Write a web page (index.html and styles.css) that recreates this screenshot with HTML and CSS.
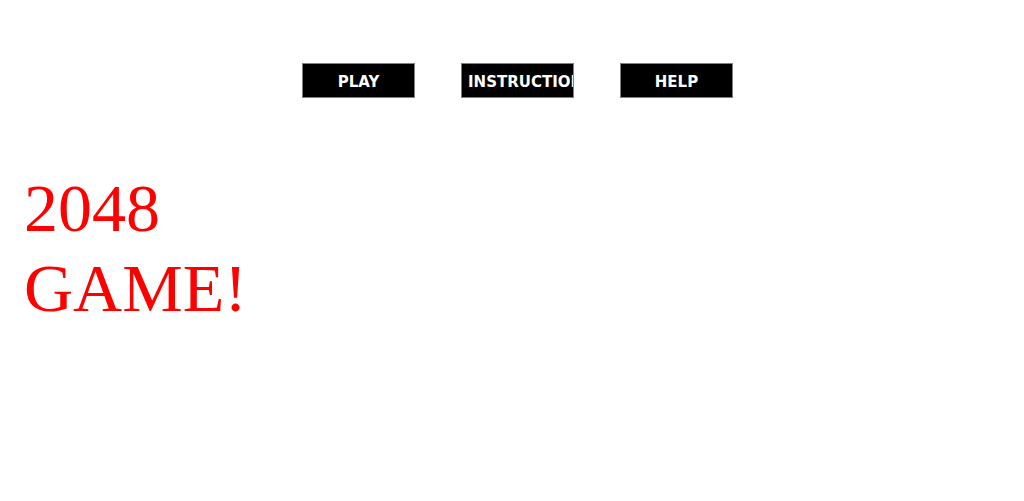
FILE: index.html
```html
<!DOCTYPE html>
<html>
<head>
<meta charset="utf-8">
<title>2048 GAME!</title>
<link rel="stylesheet" href="styles.css">
</head>
<body>

<div class="menu">
	<div class="btn">PLAY</div>
	<div class="btn">INSTRUCTIONS</div>
	<div class="btn">HELP</div>
</div>

<h1 class="title">2048 GAME!</h1>

</body>
</html>
```
FILE: styles.css
```css
body {
	margin: 0;
	background: #fff;
	font-family: "Liberation Serif", serif;
}
/* menu */
.menu {
	display: flex;
	justify-content: center;
	gap: 46px;
	padding-left: 11px;
	margin-top: 63px;
}
.btn {
	box-sizing: border-box;
	width: 113px;
	height: 35px;
	line-height: 33px;
	background: #000;
	color: #fff;
	border: 1px solid #808080;
	font-family: "DejaVu Sans", sans-serif;
	font-weight: bold;
	font-size: 15px;
	text-align: center;
	white-space: nowrap;
	overflow: hidden;
	padding: 2px 6px 0;
}
/* title */
.title {
	width: 230px;
	margin: 70px 0 0 24px;
	font-weight: normal;
	font-size: 68px;
	line-height: 80px;
	color: #f00;
}
```
